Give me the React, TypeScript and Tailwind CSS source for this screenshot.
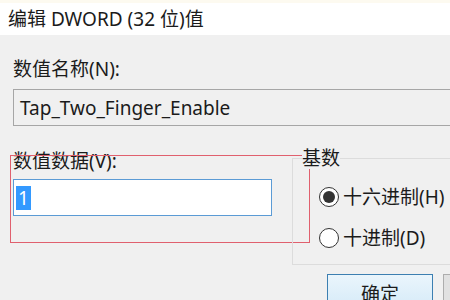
export default function App() {
  return (
    <div
      className="w-[450px] h-[300px] overflow-hidden bg-[#f0f0f0] text-[#1b1b1b]"
      style={{ fontFamily: '"Noto Sans", "Noto Sans CJK SC", sans-serif' }}
    >
      {/* Title bar */}
      <div className="h-[35px] bg-white border-t-[3px] border-[#fdfaf0] flex items-center px-[8px] text-[19px] leading-[22px]">
        编辑 DWORD (32 位)值
      </div>

      <div className="pl-[13px]">
        <div className="pt-[23px] text-[19px] leading-[22px]">数值名称(N):</div>
        <div className="mt-[9px] w-[460px] h-[37px] border border-[#a6a6a6] bg-[#f0f0f0] flex items-center pl-[6px] text-[19px] leading-[22px]">
          Tap_Two_Finger_Enable
        </div>

        <div className="mt-[24px] flex relative">
          {/* annotation rectangle */}
          <div className="absolute left-[-3px] top-[5px] w-[300px] h-[88px] border-[1.5px] border-[#e0606e] pointer-events-none" />

          <div className="w-[259px] shrink-0">
            <div className="text-[19px] leading-[22px]">数值数据(V):</div>
            <div className="mt-[7px] h-[37px] border border-[#5b9bd5] bg-white flex items-center pl-[2px]">
              <span className="bg-[#3399ff] text-white text-[19px] leading-[24px] px-[2px]">1</span>
            </div>
          </div>

          <div className="ml-[20px] mt-[8px] relative w-[170px] shrink-0 h-[107px] border border-[#dcdcdc] border-r-0">
            <div className="absolute left-[9px] top-[-12px] bg-[#f0f0f0] text-[19px] leading-[22px]">基数</div>
            <div className="pl-[26px] pt-[27px] flex flex-col gap-[19px]">
              <label className="flex items-center gap-[4px] text-[19px] leading-[22px]">
                <span className="w-[20px] h-[20px] shrink-0 rounded-full border border-[#333] bg-white flex items-center justify-center">
                  <span className="w-[12px] h-[12px] rounded-full bg-[#333]" />
                </span>
                <span className="whitespace-nowrap">十六进制(H)</span>
              </label>
              <label className="flex items-center gap-[4px] text-[19px] leading-[22px]">
                <span className="w-[20px] h-[20px] shrink-0 rounded-full border border-[#333] bg-white" />
                <span className="whitespace-nowrap">十进制(D)</span>
              </label>
            </div>
          </div>
        </div>

        <div className="flex gap-[10px] mt-[9px] pl-[314px]">
          <div className="w-[106px] h-[34px] shrink-0 border border-[#3c7fb1] bg-gradient-to-b from-[#eaf5fc] to-[#d6ebf8] flex items-center justify-center text-[19px] leading-[22px] pt-[6px]">
            确定
          </div>
          <div className="w-[106px] h-[34px] shrink-0 border border-[#adadad] bg-[#e1e1e1]" />
        </div>
      </div>
    </div>
  );
}
